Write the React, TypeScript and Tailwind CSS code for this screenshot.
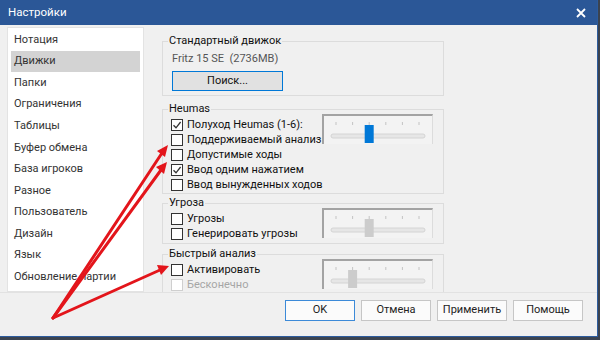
import React from "react";

const FONT = { fontFamily: 'Roboto, "Noto Sans", Arial, sans-serif' };

function Check({ checked, disabled, label }: { checked?: boolean; disabled?: boolean; label: string }) {
  return (
    <div className="flex h-[15px] items-center whitespace-nowrap">
      <div
        className={
          "flex h-[12px] w-[12px] shrink-0 items-center justify-center border bg-white " +
          (disabled ? "border-[#cfcfcf]" : "border-[#333333]")
        }
      >
        {checked && (
          <svg width="10" height="10" viewBox="0 0 10 10">
            <path d="M1.5 5.2 L4 7.8 L8.6 2" fill="none" stroke="#333" strokeWidth="1.3" />
          </svg>
        )}
      </div>
      <span className={"ml-[4px] text-[11px] leading-[15px] " + (disabled ? "text-[#a6a6a6]" : "text-[#111]")}>
        {label}
      </span>
    </div>
  );
}

function Slider({ pos, blue }: { pos: number; blue?: boolean }) {
  const ticks = [12, 28.6, 45.2, 61.8, 78.4, 95];
  const cx = ticks[pos];
  return (
    <div className="h-[30px] w-[111px] shrink-0 border-l-2 border-t-2 border-r border-l-[#a3a3a3] border-t-[#a3a3a3] border-r-[#dcdcdc] bg-[#f3f3f3]">
      <svg width="108" height="28" viewBox="0 0 108 28">
        {ticks.map((t, i) => (
          <rect key={i} x={t - 0.5} y={6} width={1} height={3} fill="#c4c4c4" />
        ))}
        <rect x={7} y={18} width={94} height={4} rx={2} fill="#e6e6e6" stroke="#d4d4d4" strokeWidth={1} />
        <rect x={cx - 4.5} y={9} width={9} height={18} fill={blue ? "#0078d7" : "#cccccc"} />
      </svg>
    </div>
  );
}

function Group({ title, className, children }: { title: string; className?: string; children: React.ReactNode }) {
  return (
    <div className={"relative w-[282px] border border-[#dcdcdc] " + (className || "")}>
      <span className="absolute left-[5px] top-[-9px] whitespace-nowrap bg-[#f0f0f0] px-[1px] text-[11px] leading-[15px] text-[#111]">
        {title}
      </span>
      {children}
    </div>
  );
}

function Btn({ label, primary }: { label: string; primary?: boolean }) {
  return (
    <div
      className={
        "flex h-[21px] w-[70px] items-center justify-center border bg-[#fbfbfb] text-[11px] text-[#222] " +
        (primary ? "border-[#3c8ad8]" : "border-[#c6c6c6]")
      }
    >
      {label}
    </div>
  );
}

export default function App() {
  const items = [
    "Нотация",
    "Движки",
    "Папки",
    "Ограничения",
    "Таблицы",
    "Буфер обмена",
    "База игроков",
    "Разное",
    "Пользователь",
    "Дизайн",
    "Язык",
    "Обновление партии",
  ];
  return (
    <div className="relative h-[340px] w-[600px] overflow-hidden bg-[#3b4350]" style={FONT}>
      <div className="flex h-[337px] w-[598px] flex-col border-b border-r border-[#2d5c9e] bg-[#f0f0f0]">
        {/* title bar */}
        <div className="flex h-[25px] items-center justify-between bg-[#2b5797] pl-[8px] pr-[11px]">
          <span className="text-[11.5px] text-white">Настройки</span>
          <svg width="10" height="10" viewBox="0 0 10 10">
            <path d="M1 1 L9 9 M9 1 L1 9" stroke="white" strokeWidth="1.8" />
          </svg>
        </div>
        {/* main */}
        <div className="flex h-[267px] pl-[7px] pt-[2px]">
          <div className="w-[137px] shrink-0 border border-[#e3e3e3] bg-white px-[3px] pt-[1px]">
            {items.map((it, i) => (
              <div
                key={it}
                className={
                  "flex h-[21.6px] items-center whitespace-nowrap pl-[3px] text-[11px] text-[#333] " +
                  (i === 1 ? "bg-[#d3d3d3]" : "")
                }
              >
                {it}
              </div>
            ))}
          </div>
          <div className="ml-[4px] flex-1 overflow-hidden pl-[14px] pt-[14px]">
            <Group title="Стандартный движок">
              <div className="pb-[4px] pl-[9px] pt-[9px]">
                <div className="h-[15px] whitespace-nowrap text-[11px] leading-[15px] text-[#555]">Fritz 15 SE&nbsp;&nbsp;(2736MB)</div>
                <div className="mt-[5px] flex h-[20px] w-[111px] items-center justify-center border border-[#0078d7] bg-[#e1e1e1] text-[11px] text-[#111]">
                  Поиск...
                </div>
              </div>
            </Group>
            <Group title="Heumas" className="mt-[13px]">
              <div className="flex pb-[1px] pl-[8px] pr-[10px] pt-[7px]">
                <div className="flex min-w-0 flex-1 flex-col">
                  <Check checked label="Полуход Heumas (1-6):" />
                  <Check label="Поддерживаемый анализ" />
                  <Check label="Допустимые ходы" />
                  <Check checked label="Ввод одним нажатием" />
                  <Check label="Ввод вынужденных ходов" />
                </div>
                <div className="-mt-[3px]">
                  <Slider pos={2} blue />
                </div>
              </div>
            </Group>
            <Group title="Угроза" className="mt-[9px]">
              <div className="flex pb-[2px] pl-[8px] pr-[10px] pt-[7px]">
                <div className="flex min-w-0 flex-1 flex-col">
                  <Check label="Угрозы" />
                  <Check label="Генерировать угрозы" />
                </div>
                <div className="-mt-[3px]">
                  <Slider pos={2} />
                </div>
              </div>
            </Group>
            <Group title="Быстрый анализ" className="mt-[10px] h-[60px]">
              <div className="flex pb-[2px] pl-[8px] pr-[10px] pt-[7px]">
                <div className="flex min-w-0 flex-1 flex-col">
                  <Check label="Активировать" />
                  <Check disabled label="Бесконечно" />
                </div>
                <div className="-mt-[3px]">
                  <Slider pos={1} />
                </div>
              </div>
            </Group>
          </div>
        </div>
        {/* bottom */}
        <div className="flex flex-1 items-start justify-end gap-[6px] border-t border-[#e2e2e2] pr-[14px] pt-[7px]">
          <Btn label="OK" primary />
          <Btn label="Отмена" />
          <Btn label="Применить" />
          <Btn label="Помощь" />
        </div>
      </div>
      {/* red arrows overlay */}
      <svg className="pointer-events-none absolute left-0 top-0" width="600" height="340" viewBox="0 0 600 340">
        <g stroke="#e3151b" strokeWidth="3" strokeLinecap="round" fill="none">
          <line x1="53" y1="318" x2="162" y2="153" />
          <line x1="53" y1="318" x2="161" y2="170" />
          <line x1="53" y1="318" x2="160" y2="270" />
        </g>
        <g fill="#e3151b">
          <polygon points="168,145 157,151 165,157" />
          <polygon points="167,162 156,167 164,174" />
          <polygon points="169,266 157,265 161,275" />
        </g>
      </svg>
    </div>
  );
}
